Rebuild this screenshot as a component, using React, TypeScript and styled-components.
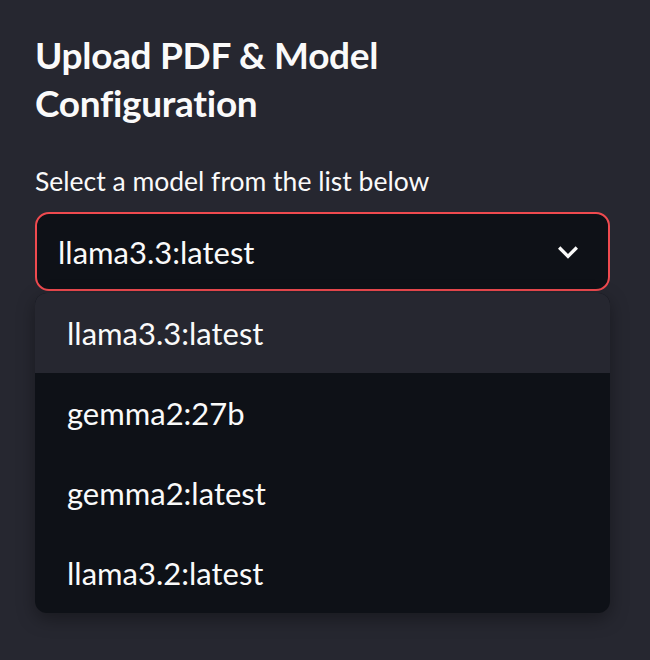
import styled, { createGlobalStyle } from "styled-components";

const GlobalStyle = createGlobalStyle`
  html, body {
    margin: 0;
    padding: 0;
    background: #262730;
  }
  body {
    font-family: Lato, "Open Sans", sans-serif;
    color: #fafafa;
  }
`;

const models = ["llama3.3:latest", "gemma2:27b", "gemma2:latest", "llama3.2:latest"];

const Sidebar = styled.aside`
  box-sizing: border-box;
  width: 650px;
  height: 660px;
  padding: 31px 40px 0 35px;
  background: #262730;
`;

const Title = styled.h2`
  margin: 0 0 36px;
  font-size: 37px;
  font-weight: 700;
  line-height: 48px;
  letter-spacing: -0.3px;
`;

const Label = styled.label`
  display: block;
  margin-bottom: 13px;
  font-size: 26.5px;
  line-height: 36px;
`;

const SelectWrap = styled.div`
  position: relative;
`;

const SelectBox = styled.div`
  box-sizing: border-box;
  display: flex;
  align-items: center;
  justify-content: space-between;
  height: 79px;
  padding: 0 20px 0 21px;
  background: #0e1117;
  border: 2px solid #ef4a4f;
  border-radius: 14px;
  font-size: 31px;
`;

const Menu = styled.ul`
  position: absolute;
  top: calc(100% + 2px);
  left: 0;
  right: 0;
  margin: 0;
  padding: 0;
  list-style: none;
  background: #0e1117;
  border-radius: 12px;
  overflow: hidden;
  box-shadow: 0 6px 18px rgba(0, 0, 0, 0.35);
`;

const Option = styled.li<{ $active?: boolean }>`
  display: flex;
  align-items: center;
  height: 80px;
  padding-left: 32px;
  font-size: 31px;
  background: ${(p) => (p.$active ? "#262730" : "transparent")};
`;

const Chevron = () => (
  <svg width="40" height="40" viewBox="0 0 24 24" fill="#fafafa" aria-hidden="true">
    <path d="M16.59 8.59L12 13.17 7.41 8.59 6 10l6 6 6-6z" />
  </svg>
);

export default function App() {
  const selected = models[0];
  return (
    <>
      <GlobalStyle />
      <Sidebar>
        <Title>
          Upload PDF &amp; Model
          <br />
          Configuration
        </Title>
        <Label>Select a model from the list below</Label>
        <SelectWrap>
          <SelectBox>
            <span>{selected}</span>
            <Chevron />
          </SelectBox>
          <Menu>
            {models.map((m) => (
              <Option key={m} $active={m === selected}>
                {m}
              </Option>
            ))}
          </Menu>
        </SelectWrap>
      </Sidebar>
    </>
  );
}
